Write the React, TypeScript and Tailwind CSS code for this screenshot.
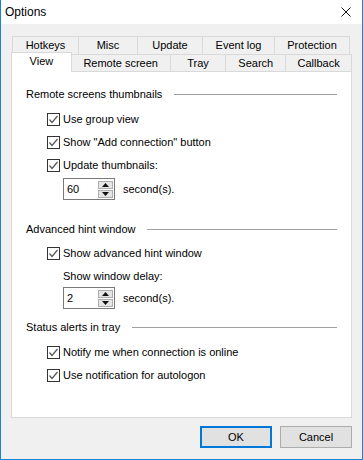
import { ReactNode } from 'react';

const font = { fontFamily: '"Liberation Sans", Arial, sans-serif' };

function Check({ label }: { label: string }) {
  return (
    <div className="flex h-[23px] items-center pl-[35px]">
      <div className="flex h-[13px] w-[13px] items-center justify-center border border-[#333333] bg-white">
        <svg width="11" height="11" viewBox="0 0 11 11">
          <path d="M1.5 5.5 L4 8.5 L9.5 2" fill="none" stroke="#555555" strokeWidth="1.2" />
        </svg>
      </div>
      <span className="ml-[3px] leading-none">{label}</span>
    </div>
  );
}

function GroupHeader({ children, className }: { children: ReactNode; className?: string }) {
  return (
    <div className={`flex h-[16px] items-center pl-[14px] pr-[14px] ${className ?? ''}`}>
      <span className="leading-none">{children}</span>
      <div className="ml-[12px] h-px flex-1 bg-[#a0a0a0]" />
    </div>
  );
}

function Spin({ value }: { value: string }) {
  return (
    <div className="flex h-[22px] items-center pl-[51px]">
      <div className="flex h-[22px] w-[52px] items-center border border-[#7a7a7a] bg-white pl-[3px] pr-[1px]">
        <span className="flex-1 leading-none">{value}</span>
        <div className="flex flex-col gap-px">
          <div className="flex h-[8px] w-[15px] items-center justify-center border border-[#adadad] bg-[#e5e5e5]">
            <svg width="7" height="4" viewBox="0 0 7 4"><path d="M0 4 L3.5 0 L7 4 Z" fill="#111" /></svg>
          </div>
          <div className="flex h-[8px] w-[15px] items-center justify-center border border-[#adadad] bg-[#e5e5e5]">
            <svg width="7" height="4" viewBox="0 0 7 4"><path d="M0 0 L3.5 4 L7 0 Z" fill="#111" /></svg>
          </div>
        </div>
      </div>
      <span className="ml-[8px] leading-none">second(s).</span>
    </div>
  );
}

const topTabs = [
  { label: 'Hotkeys', w: 67 },
  { label: 'Misc', w: 59 },
  { label: 'Update', w: 65 },
  { label: 'Event log', w: 72 },
  { label: 'Protection', w: 75 },
];

const frontTabs = [
  { label: 'Remote screen', w: 99 },
  { label: 'Tray', w: 56 },
  { label: 'Search', w: 60 },
  { label: 'Callback', w: 66 },
];

export default function App() {
  return (
    <div
      className="flex h-[460px] w-[363px] flex-col border-x border-b border-[#1883d7] bg-[#f0f0f0] text-[11px] text-black"
      style={font}
    >
      {/* Title bar */}
      <div className="flex h-[24px] items-center justify-between bg-white pl-[4px] pr-[11px]">
        <span className="text-[12px] leading-none">Options</span>
        <svg width="10" height="10" viewBox="0 0 10 10">
          <path d="M0.5 0.5 L9.5 9.5 M9.5 0.5 L0.5 9.5" stroke="#111" strokeWidth="1" />
        </svg>
      </div>

      {/* Tabs */}
      <div className="mt-[12px] pl-[9px] pr-[10px]">
        <div className="flex h-[18px] pl-[2px]">
          {topTabs.map((t, i) => (
            <div
              key={t.label}
              className={`flex items-center justify-center border-t border-r border-[#d9d9d9] leading-none ${i === 0 ? 'border-l' : ''}`}
              style={{ width: t.w }}
            >
              {t.label}
            </div>
          ))}
        </div>
        <div className="relative flex h-[17px] pl-[1px]">
          <div className="relative z-10 -mt-[2px] -mb-[1px] flex w-[61px] items-center justify-center border-x border-t border-[#d9d9d9] bg-white pb-[2px] leading-none">
            View
          </div>
          {frontTabs.map((t) => (
            <div
              key={t.label}
              className="flex items-center justify-center border-t border-r border-[#d9d9d9] leading-none"
              style={{ width: t.w }}
            >
              {t.label}
            </div>
          ))}
        </div>

        {/* Panel */}
        <div className="ml-[1px] flex h-[347px] flex-col border border-[#d9d9d9] bg-white">
          <GroupHeader className="mt-[14px]">Remote screens thumbnails</GroupHeader>
          <div className="mt-[6px]">
            <Check label="Use group view" />
            <Check label='Show "Add connection" button' />
            <Check label="Update thumbnails:" />
          </div>
          <div className="mt-[1px]">
            <Spin value="60" />
          </div>

          <GroupHeader className="mt-[21px]">Advanced hint window</GroupHeader>
          <div className="mt-[5px]">
            <Check label="Show advanced hint window" />
          </div>
          <div className="flex h-[22px] items-center pl-[51px] leading-none">Show window delay:</div>
          <Spin value="2" />

          <GroupHeader className="mt-[10px]">Status alerts in tray</GroupHeader>
          <div className="mt-[6px]">
            <Check label="Notify me when connection is online" />
            <Check label="Use notification for autologon" />
          </div>
        </div>
      </div>

      {/* Buttons */}
      <div className="mt-[8px] flex justify-end gap-[8px] pr-[10px]">
        <button className="h-[22px] w-[72px] border-2 border-[#0078d7] bg-[#e1e1e1] leading-none">OK</button>
        <button className="h-[22px] w-[72px] border border-[#adadad] bg-[#e1e1e1] leading-none">Cancel</button>
      </div>
    </div>
  );
}
